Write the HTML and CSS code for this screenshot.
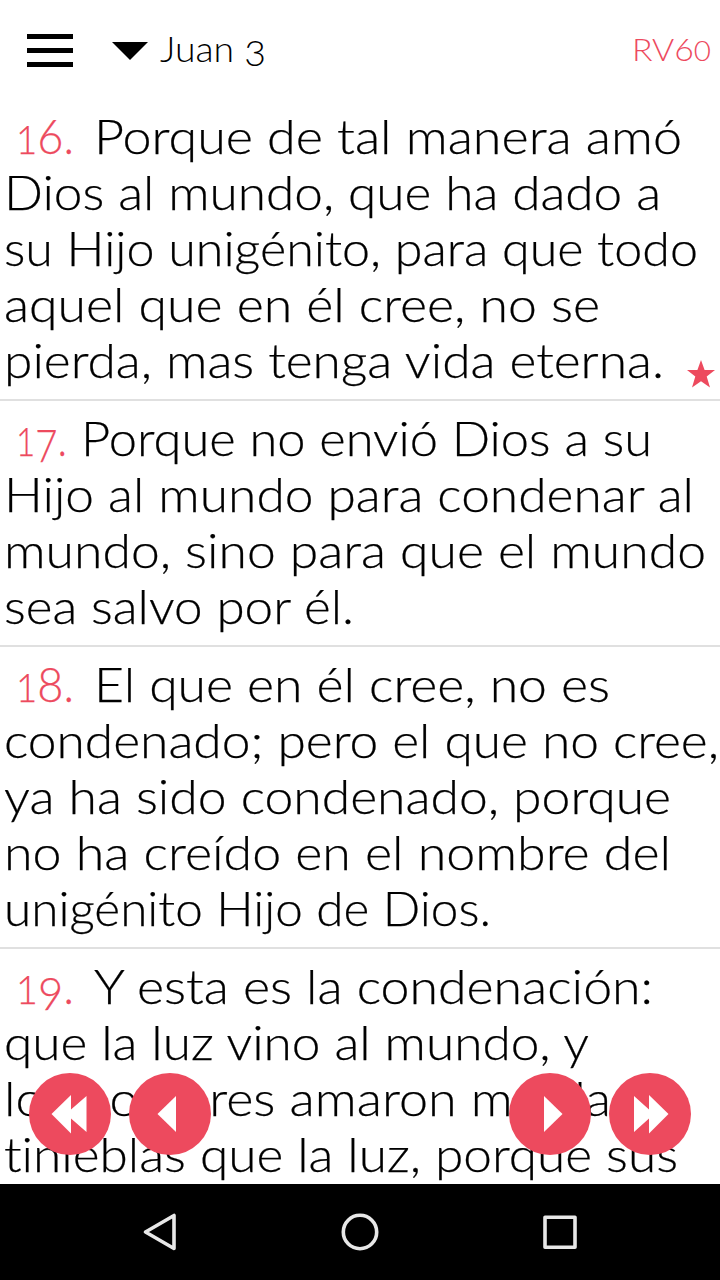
FILE: index.html
```html
<!DOCTYPE html>
<html lang="es">

<head>
    <meta charset="UTF-8">
    <meta name="viewport" content="width=device-width, initial-scale=1.0">
    <title>Juan 3</title>
    <link rel="stylesheet" href="styles.css">
</head>

<body>
    <div class="app">
        <header class="header">
            <div class="menu">
                <span></span>
                <span></span>
                <span></span>
            </div>
            <div class="chapter">
                <svg class="caret" width="36" height="18" viewBox="0 0 36 18"><path d="M0 0h36L18 18z"/></svg>
                <span class="fit" data-width="106">Juan <span class="low">3</span></span>
            </div>
            <div class="version"><span class="fit" data-width="79">RV6<span class="small-zero">0</span></span></div>
        </header>

        <main class="verses">
            <div class="verse">
                <div class="line"><span class="number fit" data-width="58"><span class="one">1</span>6.</span><span class="fit" data-width="588">Porque de tal manera amó</span></div>
                <div class="line"><span class="fit" data-width="657">Dios al mundo, que ha dado a</span></div>
                <div class="line"><span class="fit" data-width="694">su Hijo unigénito, para que todo</span></div>
                <div class="line"><span class="fit" data-width="596">aquel que en él cree, no se</span></div>
                <div class="line"><span class="fit" data-width="660">pierda, mas tenga vida eterna.</span></div>
                <svg class="star" width="28" height="28" viewBox="0 0 28 28"><path d="M14 0l3.6 10H28l-8.3 6.6L23 27.5l-9-6.3-9 6.3 3.3-10.9L0 10h10.4z"/></svg>
            </div>
            <div class="verse">
                <div class="line"><span class="number narrow fit" data-width="51"><span class="one">1</span><span class="seven">7</span>.</span><span class="fit" data-width="571">Porque no envió Dios a su</span></div>
                <div class="line"><span class="fit" data-width="690">Hijo al mundo para condenar al</span></div>
                <div class="line"><span class="fit" data-width="702">mundo, sino para que el mundo</span></div>
                <div class="line"><span class="fit" data-width="350">sea salvo por él.</span></div>
            </div>
            <div class="verse">
                <div class="line"><span class="number fit" data-width="58"><span class="one">1</span>8.</span><span class="fit" data-width="516">El que en él cree, no es</span></div>
                <div class="line"><span class="fit" data-width="715">condenado; pero el que no cree,</span></div>
                <div class="line"><span class="fit" data-width="667">ya ha sido condenado, porque</span></div>
                <div class="line"><span class="fit" data-width="667">no ha creído en el nombre del</span></div>
                <div class="line"><span class="fit" data-width="487">unigénito Hijo de Dios.</span></div>
            </div>
            <div class="verse">
                <div class="line"><span class="number fit" data-width="58"><span class="one">1</span><span class="nine">9</span>.</span><span class="fit" data-width="559">Y esta es la condenación:</span></div>
                <div class="line"><span class="fit" data-width="585">que la luz vino al mundo, y</span></div>
                <div class="line"><span class="fit" data-width="629">los hombres amaron más las</span></div>
                <div class="line"><span class="fit" data-width="674">tinieblas que la luz, porque sus</span></div>
            </div>
        </main>

        <div class="controls">
            <svg class="round" viewBox="0 0 82 82"><circle cx="41" cy="41" r="41"/><path d="M22.5 41L42 22v14.5L57.5 23v36L42 45.5v15z"/></svg>
            <svg class="round" viewBox="0 0 82 82"><circle cx="41" cy="41" r="41"/><path d="M28.5 41L47 23v36z"/></svg>
            <svg class="round next" viewBox="0 0 82 82"><circle cx="41" cy="41" r="41"/><path d="M53.5 41L35 23v36z"/></svg>
            <svg class="round" viewBox="0 0 82 82"><circle cx="41" cy="41" r="41"/><path d="M59.5 41L40 22v14.5L25 23v36l15-13.5v15z"/></svg>
        </div>

        <nav class="navbar">
            <svg viewBox="0 0 40 40"><path d="M5.5 20L34 3.5v33z"/></svg>
            <svg viewBox="0 0 40 40"><circle cx="20" cy="20" r="16.7"/></svg>
            <svg viewBox="0 0 40 40"><rect x="5" y="5.2" width="30" height="30"/></svg>
        </nav>
    </div>

    <script>
        // Stretch each line to its measure
        document.querySelectorAll('.fit').forEach(function (el) {
            const natural = el.getBoundingClientRect().width;
            el.style.width = `${natural}px`;
            el.style.marginRight = `${el.dataset.width - natural}px`;
            el.style.transform = `scaleX(${el.dataset.width / natural})`;
        });
    </script>
</body>

</html>
```
FILE: styles.css
```css
body,
html {
    margin: 0;
    padding: 0;
    height: 100%;
    font-family: Lato, "Open Sans", sans-serif;
    font-weight: 300;
    font-variant-ligatures: none;
    color: #000;
    background-color: #fff;
}

.app {
    position: relative;
    display: flex;
    flex-direction: column;
    height: 1280px;
    overflow: hidden;
}

.header {
    display: flex;
    flex: none;
    align-items: center;
    height: 99px;
    padding: 0 9px 0 27px;
    box-sizing: border-box;
}

.menu {
    display: flex;
    flex-direction: column;
    gap: 9px;
    width: 46px;
    padding-top: 2px;
}

.menu span {
    height: 5px;
    background-color: #000;
}

.chapter {
    display: flex;
    align-items: center;
    height: 46px;
    margin-left: 39px;
    font-size: 36px;
    line-height: 42px;
}

.caret {
    margin: 2px 12px 0 0;
}

.low {
    display: inline-block;
    transform: translateY(4px);
}

.chapter .fit {
    margin-top: -3px;
}

.version {
    margin-left: auto;
    margin-top: -2px;
    font-size: 32px;
    color: #ed4a5e;
}

.small-zero {
    font-size: 28px;
}

.fit {
    display: inline-block;
    white-space: nowrap;
    transform-origin: left center;
}

.verses {
    flex: 1;
    min-height: 0;
    overflow: hidden;
}

.verse {
    position: relative;
    padding: 9px 0 11px 4px;
    border-bottom: 2px solid #e0e0e0;
}

.line {
    display: flex;
    height: 56px;
    font-size: 48px;
    line-height: 56px;
    white-space: nowrap;
    -webkit-text-stroke: 0.25px currentColor;
}

.number {
    margin-left: 12px;
    color: #ed4a5e;
}

.number + .fit {
    margin-left: 20px;
}

.number.narrow + .fit {
    margin-left: 14px;
}

.one {
    font-size: 39px;
}

.seven,
.nine {
    display: inline-block;
    font-size: 45px;
    line-height: 1;
    transform: translateY(6px);
}

.star {
    position: absolute;
    right: 5px;
    bottom: 11px;
    fill: #ed4a5e;
}

.controls {
    position: absolute;
    left: 29px;
    right: 29px;
    top: 1073px;
    display: flex;
    gap: 18px;
}

.round {
    width: 82px;
    height: 82px;
    fill: #fff;
}

.round circle {
    fill: #ed4a5e;
}

.next {
    margin-left: auto;
}

.navbar {
    display: flex;
    flex: none;
    align-items: center;
    justify-content: center;
    gap: 160px;
    height: 96px;
    background-color: #000;
}

.navbar svg {
    width: 40px;
    height: 40px;
    fill: none;
    stroke: #e8e8e8;
    stroke-width: 3.6;
    stroke-linejoin: round;
}
```
